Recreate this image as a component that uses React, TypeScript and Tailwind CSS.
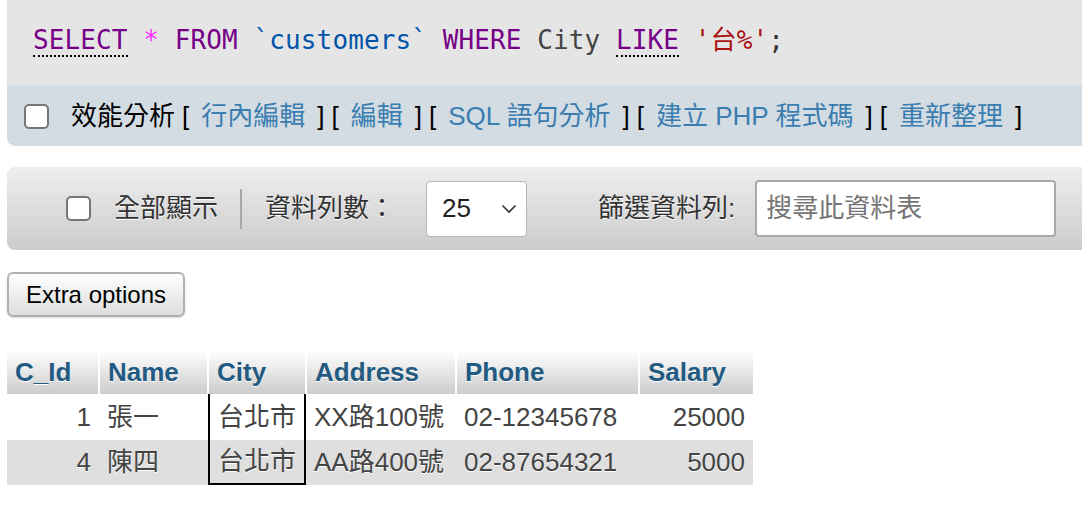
import React from 'react';

const sans = "font-['Liberation_Sans','Noto_Sans_CJK_TC',sans-serif]";
const mono = "font-['DejaVu_Sans_Mono','Noto_Sans_CJK_TC',monospace]";

interface Row {
    id: number;
    name: string;
    city: string;
    address: string;
    phone: string;
    salary: number;
}

const rows: Row[] = [
    { id: 1, name: '張一', city: '台北市', address: 'XX路100號', phone: '02-12345678', salary: 25000 },
    { id: 4, name: '陳四', city: '台北市', address: 'AA路400號', phone: '02-87654321', salary: 5000 },
];

const columns = ['C_Id', 'Name', 'City', 'Address', 'Phone', 'Salary'];

const Checkbox: React.FC = () => (
    <span className="inline-block w-[25px] h-[25px] shrink-0 rounded-[5px] border-2 border-[#767676] bg-white" />
);

const Bracket: React.FC<{ label: string }> = ({ label }) => (
    <>
        <span className="ml-[7px] text-black">[</span>
        <a className="mx-[12px] text-[#3a7db0]">{label}</a>
        <span className="text-black">]</span>
    </>
);

const App: React.FC = () => {
    return (
        <div className={`${sans} w-full min-h-[510px] overflow-hidden bg-white`}>
            {/* query box */}
            <div className="ml-[7px] mr-[-20px] h-[85px] bg-[#e5e5e5] pl-[26px] pt-[25px]">
                <div className={`${mono} text-[26px] tracking-[0.1px] leading-[30px] whitespace-pre text-[#333]`}>
                    <span className="text-[#770088] border-b-2 border-dotted border-black">SELECT</span>{' '}
                    <span className="text-[#ff33ff]">*</span>{' '}
                    <span className="text-[#770088]">FROM</span>{' '}
                    <span className="text-[#0055aa]">`customers`</span>{' '}
                    <span className="text-[#770088]">WHERE</span>{' '}
                    <span className="text-[#444]">City</span>{' '}
                    <span className="text-[#770088] border-b-2 border-dotted border-black">LIKE</span>{' '}
                    <span className="text-[#aa1111]">'台%'</span>
                    <span className="text-[#333]">;</span>
                </div>
            </div>

            {/* actions */}
            <div className="ml-[7px] mr-[-20px] h-[61px] bg-[#d3dce3] rounded-b-[8px] flex items-center pl-[17px] pt-[2px] text-[26px] whitespace-nowrap">
                <Checkbox />
                <span className="ml-[22px] text-black">效能分析</span>
                <Bracket label="行內編輯" />
                <Bracket label="編輯" />
                <Bracket label="SQL 語句分析" />
                <Bracket label="建立 PHP 程式碼" />
                <Bracket label="重新整理" />
            </div>

            {/* navigation bar */}
            <div className="ml-[7px] mr-[-20px] mt-[21px] h-[83px] rounded-[8px] bg-linear-to-b from-[#eeeeee] to-[#cccccc] flex items-center pl-[59px] text-[26px] text-[#333] [text-shadow:0_1px_0_#fff] whitespace-nowrap">
                <Checkbox />
                <span className="ml-[23px]">全部顯示</span>
                <span className="ml-[22px] w-[2px] h-[40px] bg-[#a8a8a8]" />
                <span className="ml-[23px]">資料列數：</span>
                <div className="ml-[31px] w-[101px] h-[56px] rounded-[4px] border-[1.5px] border-[#b5b5b5] bg-white flex items-center justify-between pl-[15px] pr-[9px] [text-shadow:none]">
                    <span className="text-[#222]">25</span>
                    <svg width="16" height="10" viewBox="0 0 16 10" fill="none">
                        <polyline points="1.5,1.5 8,8 14.5,1.5" stroke="#333" strokeWidth="1.6" />
                    </svg>
                </div>
                <span className="ml-[71px]">篩選資料列:</span>
                <div className="ml-[20px] w-[301px] h-[57px] rounded-[4px] border-2 border-[#aaaaaa] bg-white flex items-center pl-[9px] text-[#757575] [text-shadow:none]">
                    搜尋此資料表
                </div>
            </div>

            {/* extra options */}
            <button className="block mt-[22px] ml-[7px] w-[178px] h-[45px] rounded-[6px] border-2 border-[#b0b0b0] bg-linear-to-b from-[#ffffff] to-[#dddddd] text-[24px] text-black shadow-[0_1px_2px_rgba(0,0,0,0.15)]">
                Extra options
            </button>

            {/* result table */}
            <table className="mt-[34px] ml-[7px] table-fixed border-separate border-spacing-0 text-[26px]">
                <colgroup>
                    <col className="w-[92px]" />
                    <col className="w-[109px]" />
                    <col className="w-[98px]" />
                    <col className="w-[150px]" />
                    <col className="w-[183px]" />
                    <col className="w-[114px]" />
                </colgroup>
                <thead>
                    <tr className="h-[43px]">
                        {columns.map((c, i) => (
                            <th
                                key={c}
                                className={`${i === 0 ? '' : 'border-l'} ${i === columns.length - 1 ? '' : 'border-r'} border-white bg-linear-to-b from-[#ffffff] to-[#cccccc] px-[8px] text-left font-bold text-[#235a81] [text-shadow:0_1px_0_#fff]`}
                            >
                                {c}
                            </th>
                        ))}
                    </tr>
                </thead>
                <tbody className="text-[#444] [text-shadow:0_1px_0_#fff]">
                    {rows.map((r, i) => {
                        const last = i === rows.length - 1;
                        return (
                            <tr key={r.id} className={i % 2 === 0 ? 'h-[46px] bg-white' : 'h-[45px] bg-[#dfdfdf]'}>
                                <td className="px-[8px] text-right">{r.id}</td>
                                <td className="px-[8px]">{r.name}</td>
                                <td className={`px-[8px] border-x-2 border-black ${last ? 'border-b-2' : ''}`}>{r.city}</td>
                                <td className="px-[8px] whitespace-nowrap">{r.address}</td>
                                <td className="px-[8px]">{r.phone}</td>
                                <td className="px-[8px] text-right">{r.salary}</td>
                            </tr>
                        );
                    })}
                </tbody>
            </table>
        </div>
    );
};

export default App;
